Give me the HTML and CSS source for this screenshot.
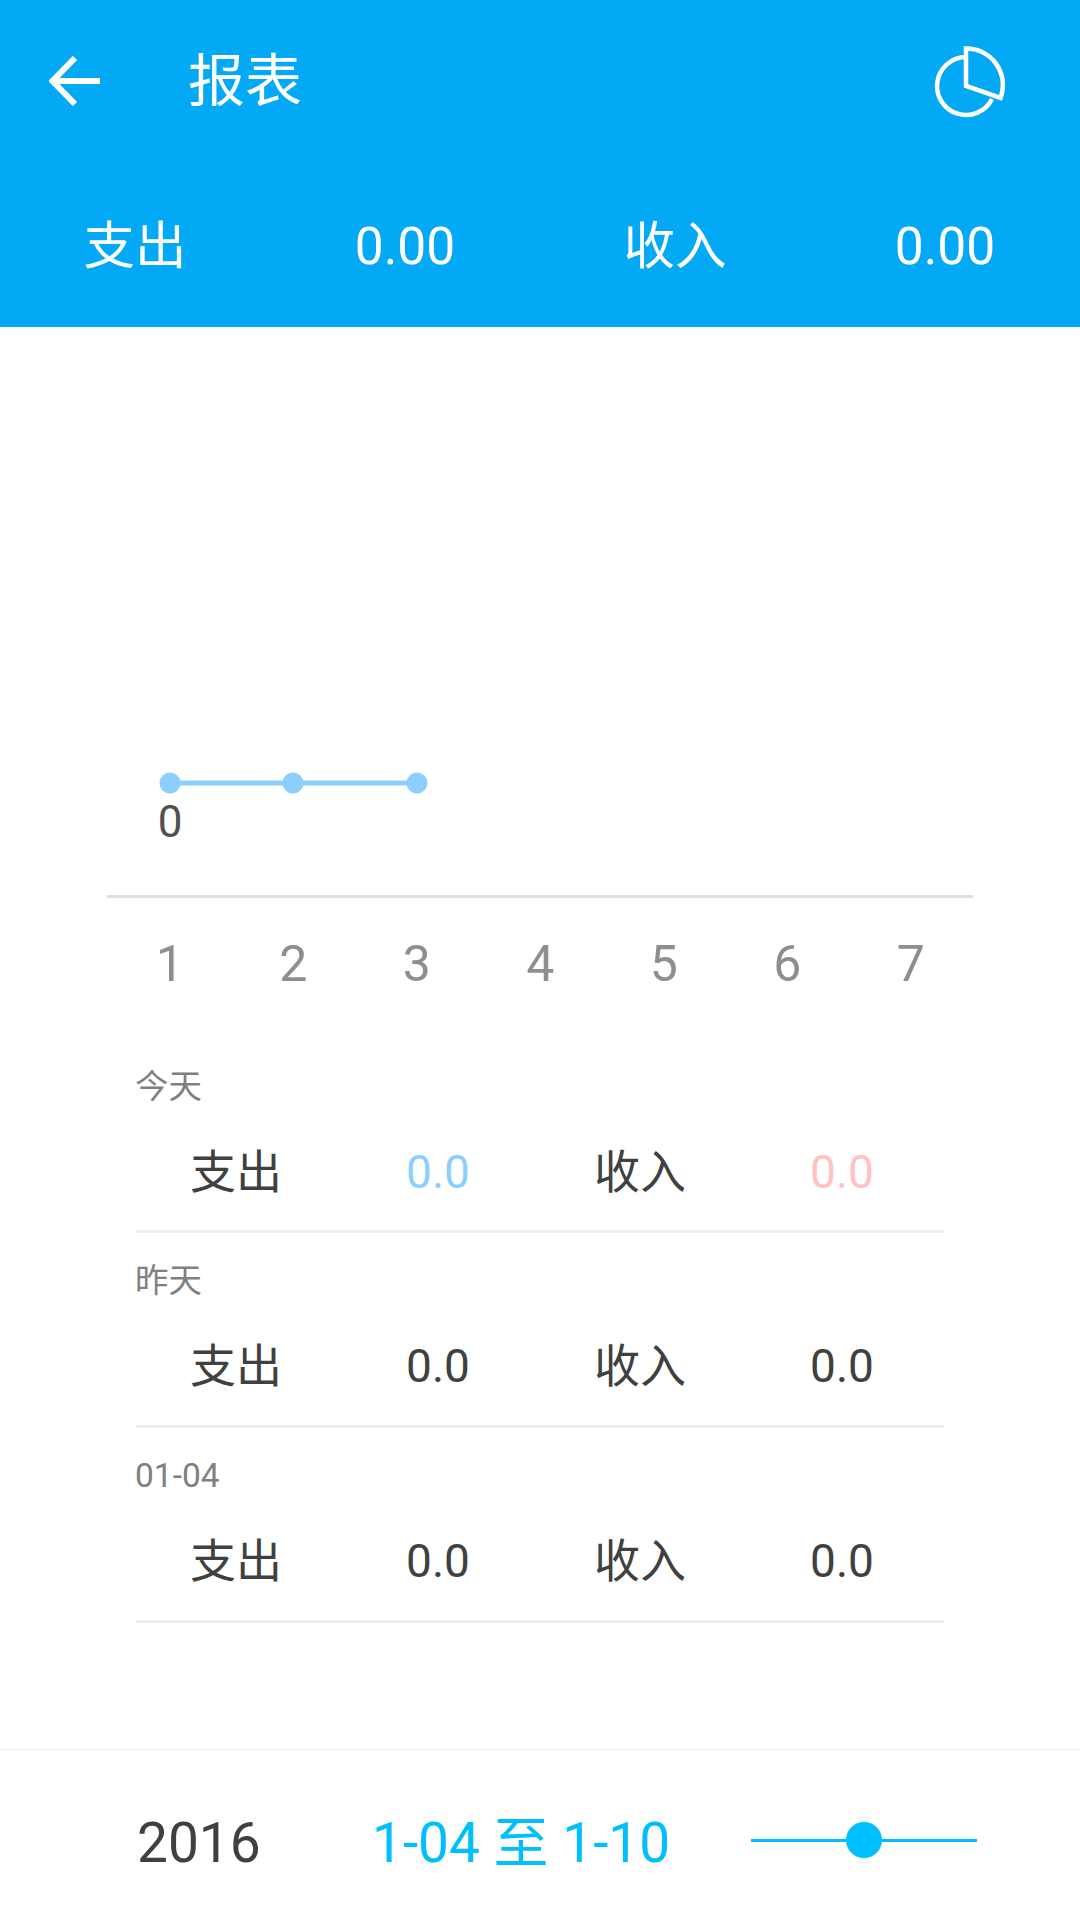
FILE: index.html
```html
<!DOCTYPE html>
<html lang="zh">
<head>
<meta charset="utf-8">
<title>报表</title>
<link rel="stylesheet" href="styles.css">
</head>
<body>
<div class="page">
  <header class="header">
    <div class="topbar">
      <svg class="back" width="52" height="50" viewBox="0 0 52 50"><path d="M3 25H51M26 2 3.500 25 26 48" fill="none" stroke="#fff" stroke-width="6"/></svg>
      <h1 class="title">报表</h1>
      <svg class="pie" width="72" height="74" viewBox="0 0 72 74"><path d="M32 12A29 29 0 1 0 59 54" fill="none" stroke="#fff" stroke-width="4.500"/><path d="M33 3.500A36.500 36.500 0 0 1 67.500 53L33 41Z" fill="none" stroke="#fff" stroke-width="4.500"/></svg>
    </div>
    <div class="summary">
      <span>支出</span><span>0.00</span><span>收入</span><span>0.00</span>
    </div>
  </header>
  <section class="chart">
    <div class="plot">
      <svg class="line" width="866" height="60" viewBox="0 0 866 60"><path d="M63 30H310" stroke="#8ccfff" stroke-width="5"/><circle cx="63" cy="30" r="10.500" fill="#8ccfff"/><circle cx="186" cy="30" r="10.500" fill="#8ccfff"/><circle cx="310" cy="30" r="10.500" fill="#8ccfff"/></svg>
      <span class="point-value">0</span>
    </div>
    <div class="axis">
      <span>1</span><span>2</span><span>3</span><span>4</span><span>5</span><span>6</span><span>7</span>
    </div>
  </section>
  <section class="list">
    <div class="day">
      <div class="day-label">今天</div>
      <div class="day-row"><span>支出</span><span class="out">0.0</span><span>收入</span><span class="in">0.0</span></div>
    </div>
    <div class="day">
      <div class="day-label">昨天</div>
      <div class="day-row"><span>支出</span><span>0.0</span><span>收入</span><span>0.0</span></div>
    </div>
    <div class="day">
      <div class="day-label">01-04</div>
      <div class="day-row"><span>支出</span><span>0.0</span><span>收入</span><span>0.0</span></div>
    </div>
  </section>
  <footer class="footer">
    <span class="year">2016</span>
    <span class="range">1-04 至 1-10</span>
    <div class="slider"><span class="knob"></span></div>
  </footer>
</div>
</body>
</html>
```
FILE: styles.css
```css
* { box-sizing: border-box; }
html, body { margin: 0; padding: 0; background: #fff; }
body { font-family: Roboto, "Noto Sans CJK SC", sans-serif; }
.page { width: 1080px; height: 1920px; display: flex; flex-direction: column; overflow: hidden; }

.header { height: 327px; background: #04a9f6; color: #fff; display: flex; flex-direction: column; }
.topbar { height: 164px; display: flex; align-items: center; padding: 0 0 0 49px; }
.back { flex: none; margin: 0 87px 2px 0; }
.title { margin: 0; font-size: 57px; font-weight: 400; line-height: 64px; flex: 1; }
.pie { flex: none; margin-right: 75px; }
.summary { display: grid; grid-template-columns: repeat(4, 270px); height: 163px; }
.summary span { font-size: 51.500px; line-height: 164px; text-align: center; margin-top: 1px; }

.chart { height: 716px; display: flex; flex-direction: column; }
.plot { height: 571px; margin: 0 107px; border-bottom: 3px solid #e0e0e0; position: relative; }
.line { position: absolute; left: 0; top: 426px; }
.point-value { position: absolute; left: 63px; top: 470px; transform: translateX(-50%); font-size: 44px; line-height: 50px; color: #505050; }
.axis { display: grid; grid-template-columns: repeat(7, 123.500px); margin-left: 108px; }
.axis span { font-size: 50px; line-height: 56px; margin-top: 38px; text-align: center; color: #8e8e8e; }

.list { margin: 0 136px; height: 707px; display: flex; flex-direction: column; }
.day { height: 195px; border-bottom: 3px solid #eee; padding-top: 28px; }
.day:first-child { height: 190px; padding-top: 24px; }
.day-label { font-size: 33.500px; line-height: 40px; color: #808080; margin-left: -1px; }
.day-row { display: grid; grid-template-columns: repeat(4, 202px); margin: 25px 0 0 -1px; }
.day-row span { font-size: 46px; line-height: 81px; text-align: center; color: #404040; }
.day-row .out { color: #8ccfff; }
.day-row .in { color: #ffc1c1; }

.footer { flex: 1; border-top: 1px solid #eee; display: flex; align-items: center; padding: 16px 103px 0 137px; margin-top: -1px; }
.year { font-size: 55px; line-height: 66px; color: #404040; width: 235px; }
.range { font-size: 55px; line-height: 66px; color: #00bfff; flex: 1; white-space: nowrap; }
.slider { width: 226px; height: 3px; background: #00bfff; position: relative; margin-top: -6px; }
.knob { position: absolute; left: 95px; top: -17px; width: 36px; height: 36px; border-radius: 50%; background: #00bfff; }
```
